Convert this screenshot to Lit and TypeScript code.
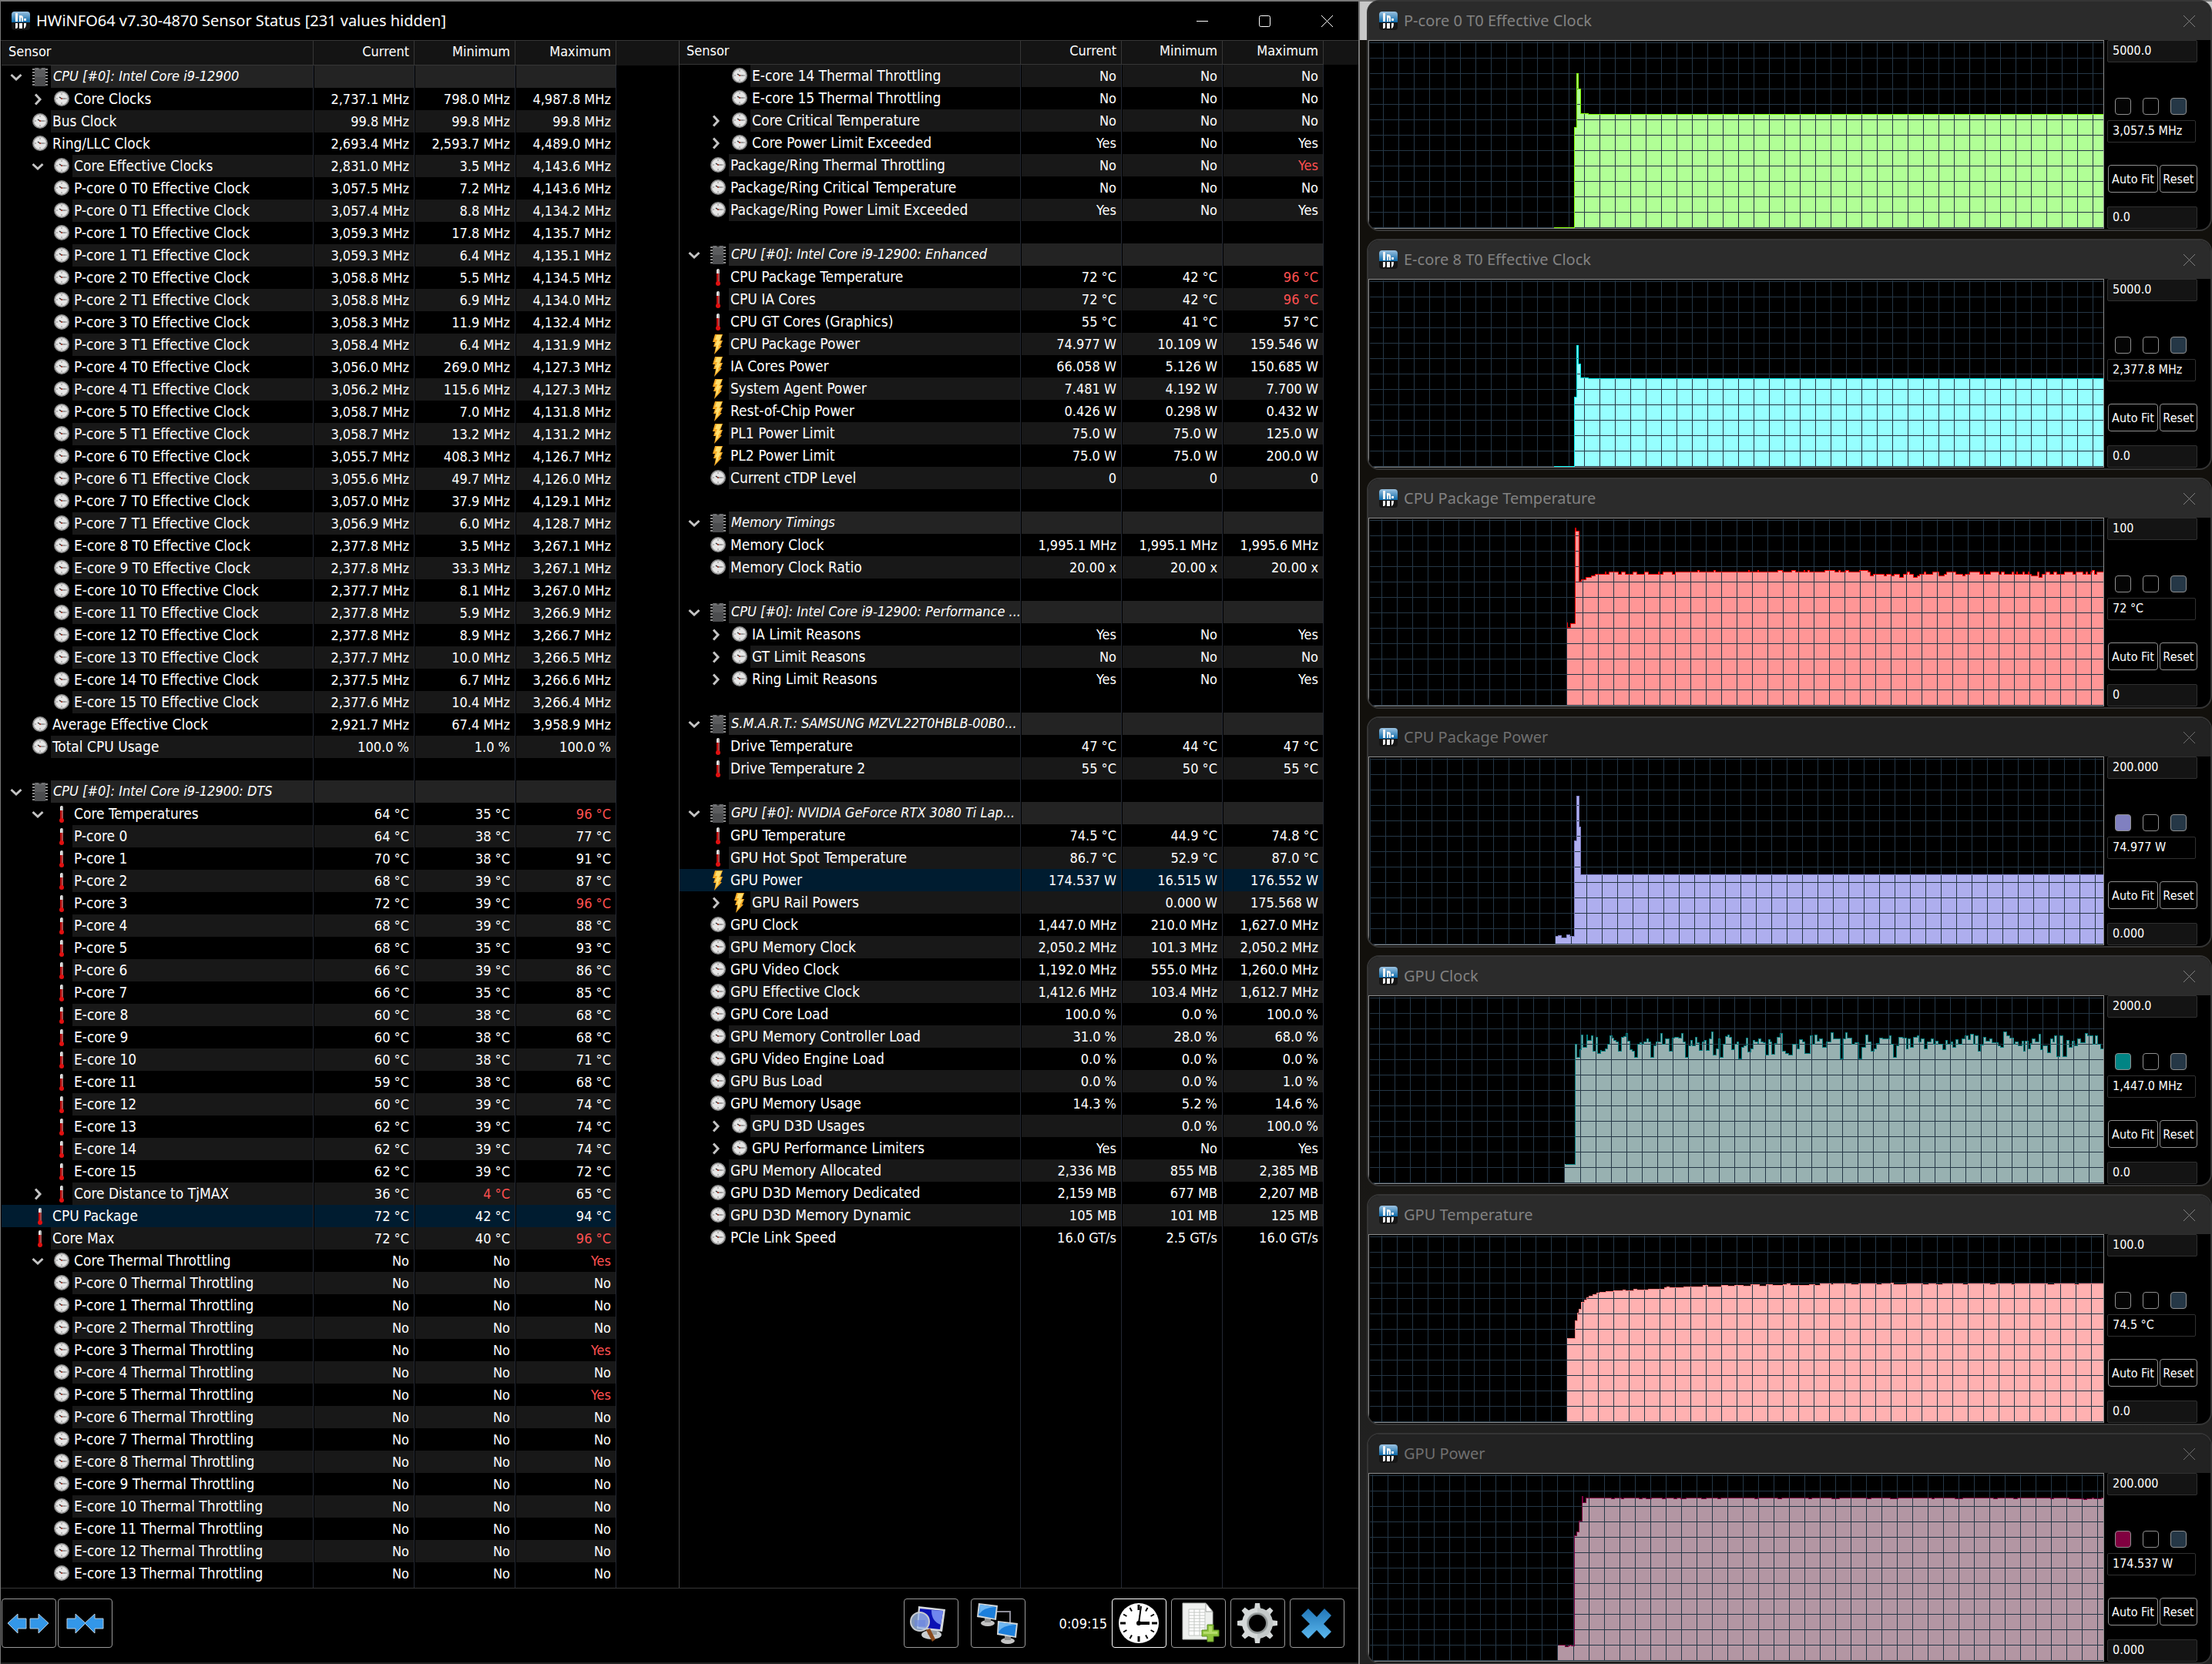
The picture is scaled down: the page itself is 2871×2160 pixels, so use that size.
import { LitElement, html, svg, css, nothing } from "lit";
import { customElement, property } from "lit/decorators.js";
import { classMap } from "lit/directives/class-map.js";

/* ---------- sensor data ----------
   Each line: level, chevron (v open, > closed, - none), icon, label | current | minimum | maximum.
   Icons: h chip, c clock, t thermometer, b bolt. "*" marks the selected row, "!" an alarm value.
   A blank line ends a group. */

const LEFT = `
0vh CPU [#0]: Intel Core i9-12900
1>c Core Clocks|2,737.1 MHz|798.0 MHz|4,987.8 MHz
0-c Bus Clock|99.8 MHz|99.8 MHz|99.8 MHz
0-c Ring/LLC Clock|2,693.4 MHz|2,593.7 MHz|4,489.0 MHz
1vc Core Effective Clocks|2,831.0 MHz|3.5 MHz|4,143.6 MHz
1-c P-core 0 T0 Effective Clock|3,057.5 MHz|7.2 MHz|4,143.6 MHz
1-c P-core 0 T1 Effective Clock|3,057.4 MHz|8.8 MHz|4,134.2 MHz
1-c P-core 1 T0 Effective Clock|3,059.3 MHz|17.8 MHz|4,135.7 MHz
1-c P-core 1 T1 Effective Clock|3,059.3 MHz|6.4 MHz|4,135.1 MHz
1-c P-core 2 T0 Effective Clock|3,058.8 MHz|5.5 MHz|4,134.5 MHz
1-c P-core 2 T1 Effective Clock|3,058.8 MHz|6.9 MHz|4,134.0 MHz
1-c P-core 3 T0 Effective Clock|3,058.3 MHz|11.9 MHz|4,132.4 MHz
1-c P-core 3 T1 Effective Clock|3,058.4 MHz|6.4 MHz|4,131.9 MHz
1-c P-core 4 T0 Effective Clock|3,056.0 MHz|269.0 MHz|4,127.3 MHz
1-c P-core 4 T1 Effective Clock|3,056.2 MHz|115.6 MHz|4,127.3 MHz
1-c P-core 5 T0 Effective Clock|3,058.7 MHz|7.0 MHz|4,131.8 MHz
1-c P-core 5 T1 Effective Clock|3,058.7 MHz|13.2 MHz|4,131.2 MHz
1-c P-core 6 T0 Effective Clock|3,055.7 MHz|408.3 MHz|4,126.7 MHz
1-c P-core 6 T1 Effective Clock|3,055.6 MHz|49.7 MHz|4,126.0 MHz
1-c P-core 7 T0 Effective Clock|3,057.0 MHz|37.9 MHz|4,129.1 MHz
1-c P-core 7 T1 Effective Clock|3,056.9 MHz|6.0 MHz|4,128.7 MHz
1-c E-core 8 T0 Effective Clock|2,377.8 MHz|3.5 MHz|3,267.1 MHz
1-c E-core 9 T0 Effective Clock|2,377.8 MHz|33.3 MHz|3,267.1 MHz
1-c E-core 10 T0 Effective Clock|2,377.7 MHz|8.1 MHz|3,267.0 MHz
1-c E-core 11 T0 Effective Clock|2,377.8 MHz|5.9 MHz|3,266.9 MHz
1-c E-core 12 T0 Effective Clock|2,377.8 MHz|8.9 MHz|3,266.7 MHz
1-c E-core 13 T0 Effective Clock|2,377.7 MHz|10.0 MHz|3,266.5 MHz
1-c E-core 14 T0 Effective Clock|2,377.5 MHz|6.7 MHz|3,266.6 MHz
1-c E-core 15 T0 Effective Clock|2,377.6 MHz|10.4 MHz|3,266.4 MHz
0-c Average Effective Clock|2,921.7 MHz|67.4 MHz|3,958.9 MHz
0-c Total CPU Usage|100.0 %|1.0 %|100.0 %

0vh CPU [#0]: Intel Core i9-12900: DTS
1vt Core Temperatures|64 °C|35 °C|!96 °C
1-t P-core 0|64 °C|38 °C|77 °C
1-t P-core 1|70 °C|38 °C|91 °C
1-t P-core 2|68 °C|39 °C|87 °C
1-t P-core 3|72 °C|39 °C|!96 °C
1-t P-core 4|68 °C|39 °C|88 °C
1-t P-core 5|68 °C|35 °C|93 °C
1-t P-core 6|66 °C|39 °C|86 °C
1-t P-core 7|66 °C|35 °C|85 °C
1-t E-core 8|60 °C|38 °C|68 °C
1-t E-core 9|60 °C|38 °C|68 °C
1-t E-core 10|60 °C|38 °C|71 °C
1-t E-core 11|59 °C|38 °C|68 °C
1-t E-core 12|60 °C|39 °C|74 °C
1-t E-core 13|62 °C|39 °C|74 °C
1-t E-core 14|62 °C|39 °C|74 °C
1-t E-core 15|62 °C|39 °C|72 °C
1>t Core Distance to TjMAX|36 °C|!4 °C|65 °C
*0-t CPU Package|72 °C|42 °C|94 °C
0-t Core Max|72 °C|40 °C|!96 °C
1vc Core Thermal Throttling|No|No|!Yes
1-c P-core 0 Thermal Throttling|No|No|No
1-c P-core 1 Thermal Throttling|No|No|No
1-c P-core 2 Thermal Throttling|No|No|No
1-c P-core 3 Thermal Throttling|No|No|!Yes
1-c P-core 4 Thermal Throttling|No|No|No
1-c P-core 5 Thermal Throttling|No|No|!Yes
1-c P-core 6 Thermal Throttling|No|No|No
1-c P-core 7 Thermal Throttling|No|No|No
1-c E-core 8 Thermal Throttling|No|No|No
1-c E-core 9 Thermal Throttling|No|No|No
1-c E-core 10 Thermal Throttling|No|No|No
1-c E-core 11 Thermal Throttling|No|No|No
1-c E-core 12 Thermal Throttling|No|No|No
1-c E-core 13 Thermal Throttling|No|No|No`;

const RIGHT = `
1-c E-core 14 Thermal Throttling|No|No|No
1-c E-core 15 Thermal Throttling|No|No|No
1>c Core Critical Temperature|No|No|No
1>c Core Power Limit Exceeded|Yes|No|Yes
0-c Package/Ring Thermal Throttling|No|No|!Yes
0-c Package/Ring Critical Temperature|No|No|No
0-c Package/Ring Power Limit Exceeded|Yes|No|Yes

0vh CPU [#0]: Intel Core i9-12900: Enhanced
0-t CPU Package Temperature|72 °C|42 °C|!96 °C
0-t CPU IA Cores|72 °C|42 °C|!96 °C
0-t CPU GT Cores (Graphics)|55 °C|41 °C|57 °C
0-b CPU Package Power|74.977 W|10.109 W|159.546 W
0-b IA Cores Power|66.058 W|5.126 W|150.685 W
0-b System Agent Power|7.481 W|4.192 W|7.700 W
0-b Rest-of-Chip Power|0.426 W|0.298 W|0.432 W
0-b PL1 Power Limit|75.0 W|75.0 W|125.0 W
0-b PL2 Power Limit|75.0 W|75.0 W|200.0 W
0-c Current cTDP Level|0|0|0

0vh Memory Timings
0-c Memory Clock|1,995.1 MHz|1,995.1 MHz|1,995.6 MHz
0-c Memory Clock Ratio|20.00 x|20.00 x|20.00 x

0vh CPU [#0]: Intel Core i9-12900: Performance ...
1>c IA Limit Reasons|Yes|No|Yes
1>c GT Limit Reasons|No|No|No
1>c Ring Limit Reasons|Yes|No|Yes

0vh S.M.A.R.T.: SAMSUNG MZVL22T0HBLB-00B0...
0-t Drive Temperature|47 °C|44 °C|47 °C
0-t Drive Temperature 2|55 °C|50 °C|55 °C

0vh GPU [#0]: NVIDIA GeForce RTX 3080 Ti Lap...
0-t GPU Temperature|74.5 °C|44.9 °C|74.8 °C
0-t GPU Hot Spot Temperature|86.7 °C|52.9 °C|87.0 °C
*0-b GPU Power|174.537 W|16.515 W|176.552 W
1>b GPU Rail Powers||0.000 W|175.568 W
0-c GPU Clock|1,447.0 MHz|210.0 MHz|1,627.0 MHz
0-c GPU Memory Clock|2,050.2 MHz|101.3 MHz|2,050.2 MHz
0-c GPU Video Clock|1,192.0 MHz|555.0 MHz|1,260.0 MHz
0-c GPU Effective Clock|1,412.6 MHz|103.4 MHz|1,612.7 MHz
0-c GPU Core Load|100.0 %|0.0 %|100.0 %
0-c GPU Memory Controller Load|31.0 %|28.0 %|68.0 %
0-c GPU Video Engine Load|0.0 %|0.0 %|0.0 %
0-c GPU Bus Load|0.0 %|0.0 %|1.0 %
0-c GPU Memory Usage|14.3 %|5.2 %|14.6 %
1>c GPU D3D Usages||0.0 %|100.0 %
1>c GPU Performance Limiters|Yes|No|Yes
0-c GPU Memory Allocated|2,336 MB|855 MB|2,385 MB
0-c GPU D3D Memory Dedicated|2,159 MB|677 MB|2,207 MB
0-c GPU D3D Memory Dynamic|105 MB|101 MB|125 MB
0-c PCIe Link Speed|16.0 GT/s|2.5 GT/s|16.0 GT/s`;

interface Row {
  level: number;
  chevron: string;
  icon: string;
  label: string;
  values: string[];
  selected: boolean;
}

const parse = (text: string): Row[][] =>
  text.trim().split("\n\n").map((group) =>
    group.split("\n").map((line) => {
      const selected = line.startsWith("*");
      const body = selected ? line.slice(1) : line;
      const [label, ...values] = body.slice(4).split("|");
      return {
        level: Number(body[0]),
        chevron: body[1],
        icon: body[2],
        label,
        values: values.length ? values : ["", "", ""],
        selected,
      };
    }),
  );

/* ---------- chart data ----------
   A segment is a list of steps "x:y" mapped into the plot by x0 + kx*x and y0 + ky*y. */

interface Segment {
  x0: number;
  kx: number;
  y0: number;
  ky: number;
  steps: string;
}

interface Chart {
  title: string;
  max: string;
  min: string;
  value: string;
  fill: string;
  line: string;
  swatch: string;
  gridStart: number;
  dim?: boolean;
  segments: Segment[];
}

const PLOT_W = 953;
const PLOT_H = 243;

const CHARTS: Chart[] = [
  {
    title: "P-core 0 T0 Effective Clock", max: "5000.0", min: "0.0", value: "3,057.5 MHz",
    fill: "#b1ff96", line: "#80ff00", swatch: "#050505", gridStart: 18,
    segments: [{ x0: -1777, kx: 1, y0: -53, ky: 1, steps: "2016:295 2043:165 2046:95 2048:115 2051:147 2061:148" }],
  },
  {
    title: "E-core 8 T0 Effective Clock", max: "5000.0", min: "0.0", value: "2,377.8 MHz",
    fill: "#96ffff", line: "#00f0f0", swatch: "#050505", gridStart: 18,
    segments: [{ x0: -1777, kx: 1, y0: -53, ky: 1, steps: "2016:295 2043:205 2046:138 2048:162 2051:180 2061:181" }],
  },
  {
    title: "CPU Package Temperature", max: "100", min: "0", value: "72 °C",
    fill: "#ff9696", line: "#ff0000", swatch: "#050505", gridStart: 16,
    segments: [{
      x0: 183, kx: 0.581, y0: 242, ky: -2.4,
      steps: "127:45 128:42 134:44 144:96 147:94 153:67 159:68 169:69 181:70 190:71 211:72 214:71 221:72 241:71 247:72 256:71 273:72 282:71 299:72 308:71 331:72 333:71 341:72 361:71 368:72 418:73 421:72 454:73 457:72 531:73 534:72 552:73 555:72 598:73 607:72 628:73 637:72 655:73 658:72 665:73 668:72 702:73 725:72 733:73 736:72 748:73 756:72 779:73 798:72 803:70 810:71 834:70 840:71 851:70 857:71 869:69 877:71 886:72 892:71 900:69 908:70 914:71 924:72 927:71 943:72 957:70 969:71 975:72 994:71 1010:70 1015:71 1026:72 1049:71 1058:72 1061:71 1073:72 1092:71 1097:72 1104:71 1121:72 1124:71 1130:72 1133:71 1145:72 1148:71 1156:72 1159:71 1164:70 1177:72 1180:69 1188:71 1196:72 1204:71 1213:72 1221:71 1238:72 1256:71 1264:72 1279:71 1285:72 1289:71 1296:72 1299:73 1304:71 1310:72",
    }],
  },
  {
    title: "CPU Package Power", max: "200.000", min: "0.000", value: "74.977 W",
    fill: "#aeaeee", line: "#8080c8", swatch: "#8080c0", gridStart: 1, dim: true,
    segments: [{ x0: -1777, kx: 1, y0: 242, ky: -1.2, steps: "2018:8 2022:9 2026:7 2033:10 2037:8 2043:112 2046:160 2049:127 2051:75" }],
  },
  {
    title: "GPU Clock", max: "2000.0", min: "0.0", value: "1,447.0 MHz",
    fill: "#98b1b1", line: "#008080", swatch: "#008484", gridStart: 13,
    segments: [
      {
        x0: -17, kx: 0.3333, y0: -73, ky: 0.3333,
        steps: "813:874 851:406 857:457 869:427 877:370 883:418 896:370 901:391 914:373 920:433 932:379 938:442 950:430 953:433 968:424 977:406 986:373 995:382 1001:391 1010:397 1019:433 1031:379 1040:376 1049:364 1055:394 1064:427 1073:433 1082:457 1094:406 1103:400 1109:406 1120:397 1130:385 1136:397 1145:457 1157:412 1166:397 1184:364 1190:406 1202:385 1217:433 1229:382 1238:379 1253:382 1265:364 1271:397 1280:457 1292:412 1301:391 1307:412 1319:379 1325:400 1334:430 1346:397 1355:391 1361:430 1373:385 1382:358 1388:448 1400:424 1409:385 1415:457 1427:406 1436:376 1445:370 1451:379 1460:427 1472:406 1481:397 1487:463 1499:418 1508:412 1517:382 1523:436 1535:424 1544:391 1550:397",
      },
      {
        x0: 183, kx: 0.581, y0: -53, ky: 0.3954,
        steps: "552:289 555:274 560:284 565:287 570:325 576:276 580:284 584:323 590:289 596:268 602:256 607:313 614:320 622:327 630:292 640:305 645:276 652:283 657:322 670:264 674:290 680:261 685:280 690:274 697:300 705:282 716:254 722:273 730:272 736:338 743:272 748:254 752:270 762:292 770:285 778:338 785:302 793:260 798:284 806:313 812:305 818:289 824:270 832:272 846:264 850:292 855:334 862:297 868:268 876:270 884:305 888:272 893:302 900:268 908:264 913:284 918:272 925:305 932:284 940:274 945:290 950:280 955:292 966:308 972:277 976:292 985:282 988:302 995:275 1000:290 1008:272 1016:264 1022:275 1028:259 1034:292 1038:262 1045:313 1050:293 1056:267 1062:280 1070:273 1076:285 1090:297 1095:302 1102:251 1108:262 1116:270 1124:292 1128:282 1135:296 1142:280 1146:313 1150:280 1156:306 1162:289 1165:274 1172:284 1180:259 1184:308 1190:297 1200:318 1207:272 1212:282 1216:264 1221:332 1228:264 1234:332 1242:277 1248:300 1254:280 1260:297 1267:272 1273:287 1284:256 1290:264 1298:262 1302:292 1306:262 1312:292 1318:307",
      },
    ],
  },
  {
    title: "GPU Temperature", max: "100.0", min: "0.0", value: "74.5 °C",
    fill: "#ffb1b1", line: "#ff8080", swatch: "#050505", gridStart: 16,
    segments: [{
      x0: 183, kx: 0.581, y0: -363, ky: 0.3954,
      steps: "127:1257 145:1199 149:1174 154:1160 159:1138 165:1130 170:1122 176:1117 185:1112 192:1107 200:1104 213:1102 230:1099 252:1097 256:1099 275:1094 282:1097 308:1094 345:1091 350:1088 355:1091 380:1089 388:1087 431:1083 440:1087 471:1083 485:1086 500:1082 520:1085 537:1081 556:1084 572:1081 585:1083 610:1081 618:1078 625:1082 667:1080 680:1083 692:1078 716:1081 722:1078 760:1081 778:1078 818:1081 830:1078 850:1076 855:1079 875:1081 886:1077 920:1080 935:1078 950:1081 965:1078 1010:1080 1022:1077 1070:1080 1085:1078 1118:1081 1127:1077 1200:1080 1215:1077 1260:1079 1270:1077",
    }],
  },
  {
    title: "GPU Power", max: "200.000", min: "0.000", value: "174.537 W",
    fill: "#b396a3", line: "#800040", swatch: "#800040", gridStart: 4, dim: true,
    segments: [{
      x0: -17, kx: 0.3333, y0: -73, ky: 0.3333,
      steps: "785:886 812:892 824:888 832:886 838:889 850:460 859:445 868:401 878:307 883:331 895:313 992:316 1004:313 1031:316 1040:313 1100:316 1112:313 1127:316 1148:313 1190:316 1202:313 1235:316 1247:313 1262:316 1283:313 1343:316 1363:313 1406:316 1418:313 1550:316 1562:313 1640:316 1655:313 1760:316 1772:313 1850:316 1880:313 1990:316 2005:313 2080:316 2110:313 2240:316 2250:313 2330:316 2360:313 2480:316 2495:313 2560:316 2575:313 2702:316 2714:313 2774:316 2832:319 2845:316 2866:313 2872:316 2902:313",
    }],
  },
];

const points = (segments: Segment[]) =>
  segments.flatMap((s) =>
    s.steps.split(" ").map((step) => {
      const [x, y] = step.split(":").map(Number);
      return [Math.round(s.x0 + s.kx * x), Math.round(s.y0 + s.ky * y)];
    }),
  );

/* ---------- icons ---------- */

const logo = html`<svg class="logo" viewBox="0 0 24 24" aria-hidden="true">
  <defs>
    <linearGradient id="lg" x1="0" y1="0" x2="0" y2="1">
      <stop offset="0" stop-color="#9cc3e2" /><stop offset="1" stop-color="#0b68a8" />
    </linearGradient>
  </defs>
  <rect width="24" height="24" rx="4" fill="#161616" />
  <path d="M0 14V4a4 4 0 0 1 4-4h16a4 4 0 0 1 4 4v10z" fill="url(#lg)" />
  <path d="M5 2h3v11H5zM10 5h2q3 0 3 3v5h-2V9q0-1-1-1v5h-2zM16 9h3v3h-3zM5 15h3v5q0 2-3 2zM10 15h4v7h-4zM16 15h3q0 6-3 7z" fill="#f4f4f4" />
</svg>`;

const chevrons: Record<string, unknown> = {
  v: svg`<path d="M1.500 5L8 11L14.500 5" />`,
  ">": svg`<path d="M5 1.500L11 8L5 14.500" />`,
};

const sensorIcons: Record<string, unknown> = {
  h: html`<svg class="sensor" viewBox="0 0 28 28" aria-hidden="true">
    <path d="M4 5h20M4 9h20M4 13h20M4 17h20M4 21h20M4 25h20" stroke="#8c8c8c" stroke-width="2" transform="translate(0 -1)" />
    <rect x="7" y="2" width="14" height="24" fill="#5a5b5d" />
    <path d="M8 2h12v3H8z" fill="#6f7072" /><path d="M12 2a2 2 0 0 0 4 0z" fill="#2b2b2b" />
    <path d="M7 14h14v12H7z" fill="#4c4d4f" />
  </svg>`,
  c: html`<svg class="sensor" viewBox="0 0 28 28" aria-hidden="true">
    <circle cx="14" cy="13" r="10" fill="#8d8d8d" />
    <circle cx="14" cy="13" r="8" fill="#e6e6e6" stroke="#c9c9c9" />
    <path d="M14 6v2M14 18v2M7 13h2M19 13h2" stroke="#888" />
    <path d="M14 13h5" stroke="#555" stroke-width="1" /><path d="M11 11l3 2" stroke="#333" stroke-width="1.500" />
    <circle cx="14" cy="13" r="1" fill="#b03a2a" />
  </svg>`,
  t: html`<svg class="sensor" viewBox="0 0 28 28" aria-hidden="true">
    <rect x="12" y="3" width="4" height="18" rx="2" fill="#e9e9e9" />
    <path d="M12 9h4v12h-4z" fill="#c40d0d" /><path d="M15 4v16" stroke="#8a8a8a" />
    <circle cx="14" cy="22" r="3" fill="#e01010" />
  </svg>`,
  b: html`<svg class="sensor" viewBox="0 0 28 28" aria-hidden="true">
    <path d="M10 1h10l-3 8h3l-3 7h2L9 27l2-10H8l2-6H7z" fill="#f6a823" />
    <path d="M12 2h7l-4 8h3l-4 7 1 1-4 5 1-8h-2l3-7h-3z" fill="#ffdf6e" />
  </svg>`,
};

const arrow = "M0 12L13 0V6H24V19H13V25Z";

const tools: Record<string, unknown> = {
  expand: svg`<g fill="#3397e8" stroke="#b9cbd9" stroke-width="1">
    <path d=${arrow} transform="translate(8 20)" /><path d=${arrow} transform="translate(61 20) scale(-1 1)" /></g>`,
  collapse: svg`<g fill="#3397e8" stroke="#b9cbd9" stroke-width="1">
    <path d=${arrow} transform="translate(36 20) scale(-1 1)" /><path d=${arrow} transform="translate(35 20)" /></g>`,
  inspect: svg`
    <ellipse cx="36" cy="47" rx="13" ry="6" fill="#c9cdd0" /><path d="M31 38l12 2v7H31z" fill="#9aa0a4" />
    <path d="M19 10l35 4-4 29-33-4z" fill="#d6dade" /><path d="M21 13l30 3-4 24-28-3z" fill="#0b12b4" />
    <path d="M36 15l15 1-3 18q-12-4-12-19z" fill="#6f86ee" />
    <path d="M29 41l5-2 7 14-4 3z" fill="#8a4a1c" /><circle cx="21" cy="30" r="12" fill="#9db9e6" fill-opacity="0.8" stroke="#c8ccd0" stroke-width="2" />
    <path d="M14 28h14v8H14z" fill="#6b86dd" fill-opacity="0.6" />`,
  remote: svg`
    <path d="M34 17h17v14" fill="none" stroke="#8d8d9a" stroke-width="2" />
    <g><ellipse cx="22" cy="32" rx="9" ry="4" fill="#c4c4c4" /><path d="M18 25h8v6h-8z" fill="#8f8f8f" />
      <path d="M10 6l25 3-2 19-25-4z" fill="#cfd6da" /><path d="M12 8l21 3-2 15-21-4z" fill="#1c7fdc" />
      <path d="M12 8l19 3q-15 1-20 9z" fill="#6fb7f2" /></g>
    <g transform="translate(25 23)"><ellipse cx="23" cy="32" rx="9" ry="4" fill="#c4c4c4" /><path d="M19 25h8v6h-8z" fill="#8f8f8f" />
      <path d="M10 6l26 3-2 19-25-4z" fill="#cfd6da" /><path d="M12 8l22 3-2 15-21-4z" fill="#1c7fdc" />
      <path d="M12 8l20 3q-16 1-21 9z" fill="#6fb7f2" /></g>`,
  clock: svg`<circle cx="35" cy="32" r="26" fill="#fff" />
    ${Array.from({ length: 12 }, (_, i) => svg`<path d=${i % 3 ? "M35 9v5" : "M35 8v7"} stroke="#000" stroke-width=${i % 3 ? 2 : 3} transform="rotate(${i * 30} 35 32)" />`)}
    <path d="M35 32l3-22" stroke="#000" stroke-width="2" /><path d="M35 32h14" stroke="#000" stroke-width="4" /><circle cx="35" cy="32" r="3" />`,
  log: svg`<path d="M15 6h30l9 11v36H15z" fill="#eef0ee" stroke="#b9bcb9" /><path d="M45 6v11h9z" fill="#fff" stroke="#9c9f9c" />
    <path d="M23 14h21v34H23z" fill="#fff" stroke="#c3c7c3" />
    <path d="M23 18h21M23 22h21M23 26h21M23 30h21M23 34h21M23 38h21M23 42h21M30 14v34M37 14v34" stroke="#c3c7c3" />
    <path d="M47 34h8v7h7v8h-7v7h-8v-7h-7v-8h7z" fill="#8fc43e" stroke="#5d8f22" /><path d="M49 36h4v7h7v3H42v-3h7z" fill="#b5dd6c" />`,
  settings: svg`<g fill="#d4d8d8">
      ${Array.from({ length: 8 }, (_, i) => svg`<path d="M31 14l1-8h6l1 8z" transform="rotate(${i * 45} 35 32)" />`)}
      <circle cx="35" cy="32" r="20" /></g>
    <path d="M35 12a20 20 0 0 1 20 20a20 20 0 0 1-20 20z" fill="#b3b9b9" fill-opacity="0.5" />
    <circle cx="35" cy="32" r="14" fill="#a9afaf" /><circle cx="35" cy="32" r="13" fill="#8b9090" /><circle cx="35" cy="32" r="11" fill="#000" />`,
  close: svg`<defs><linearGradient id="cx" x1="0" y1="0" x2="0" y2="1"><stop offset="0" stop-color="#2176b8" /><stop offset="1" stop-color="#5bb8ee" /></linearGradient></defs>
    <path d="M24 13l11 11 10-11 9 9-10 11 10 10-9 9-10-11-11 11-9-9 11-10-11-11z" fill="url(#cx)" />`,
};

const cross = html`<svg class="glyph" viewBox="0 0 15 15" aria-hidden="true"><path d="M0 0L15 15M15 0L0 15" /></svg>`;

const base = css`
  * { box-sizing: border-box; }
  button { margin: 0; padding: 0; border: 0; background: none; color: inherit; font: inherit; }
  .logo { display: block; width: 24px; height: 24px; flex: none; }
  .glyph { display: block; width: 15px; height: 15px; fill: none; stroke: currentColor; stroke-width: 1; overflow: visible; }
`;

/* ---------- sensor table ---------- */

@customElement("sensor-table")
export class SensorTable extends LitElement {
  static styles = [base, css`
    :host { display: flex; flex-direction: column; min-width: 0; color: #fff; }
    table { width: 100%; table-layout: fixed; border-collapse: separate; border-spacing: 0; }
    .value { width: 131px; }
    .rest { width: var(--rest); }
    th { height: var(--head); padding: 0 6px 4px; background: #141414; border-right: 1px solid #363636; border-bottom: 1px solid #363636; font-weight: 400; line-height: 22px; text-align: right; }
    th:first-child { padding-left: 9px; text-align: left; }
    th:last-child { border-right: 0; border-bottom-color: #141414; }
    td { height: 29px; padding: 0 6px 0 0; border-left: 1px solid #000; border-right: 1px solid #232833; line-height: 28px; text-align: right; white-space: nowrap; }
    td:first-child { padding: 0; border-left: 0; }
    td:last-child { border-right: 0; }
    .name { display: flex; align-items: center; height: 29px; padding-left: 5px; }
    .level1 { padding-left: 33px; }
    .toggle { flex: none; width: 28px; height: 28px; margin-right: 3px; display: grid; place-items: center; }
    .toggle svg { width: 16px; height: 16px; fill: none; stroke: #c4c4c4; stroke-width: 3; }
    .sensor { flex: none; width: 28px; height: 28px; }
    .label { flex: 1; min-width: 0; height: 29px; padding-left: 2px; font-size: 19px; line-height: 28px; text-align: left; overflow: hidden; }
    .stripe .label, .stripe .num { background: #181818; }
    .head .label, .head .num { background: #232323; font-style: italic; }
    .head .label { padding-left: 3px; font-size: 18px; }
    .selected td:not(.end), .selected .label { background: #001c30; }
    .alarm { color: #ff5050; }
    .rules { flex: 1; display: grid; grid-template-columns: minmax(0, 1fr) 131px 131px 131px var(--rest); }
    .rule { border-right: 1px solid #232833; }
  `];

  @property({ attribute: false }) groups: Row[][] = [];

  private row(r: Row, i: number) {
    const head = r.icon === "h";
    return html`<tr class=${classMap({ stripe: i % 2 === 0, head, selected: r.selected })}>
      <td>
        <div class=${classMap({ name: true, level1: r.level === 1 })}>
          ${r.chevron === "-"
            ? html`<span class="toggle"></span>`
            : html`<button class="toggle" aria-label=${r.label} aria-expanded=${r.chevron === "v"}>
                <svg viewBox="0 0 16 16" aria-hidden="true">${chevrons[r.chevron]}</svg>
              </button>`}
          ${sensorIcons[r.icon]}
          <span class="label">${r.label}</span>
        </div>
      </td>
      ${r.values.map((v) => html`<td class=${classMap({ num: true, alarm: v.startsWith("!") })}>${v.replace("!", "")}</td>`)}
      <td class="end"></td>
    </tr>`;
  }

  render() {
    const last = this.groups.length - 1;
    const gap = html`<tr><td></td><td></td><td></td><td></td><td></td></tr>`;
    return html`<table>
      <colgroup><col /><col class="value" /><col class="value" /><col class="value" /><col class="rest" /></colgroup>
      <thead><tr><th>Sensor</th><th>Current</th><th>Minimum</th><th>Maximum</th><th></th></tr></thead>
      ${this.groups.map((g, n) => html`<tbody>${g.map((r, i) => this.row(r, i))}${n < last ? gap : nothing}</tbody>`)}
    </table>
    <div class="rules"><div class="rule"></div><div class="rule"></div><div class="rule"></div><div class="rule"></div></div>`;
  }
}

/* ---------- graph window ---------- */

@customElement("graph-window")
export class GraphWindow extends LitElement {
  static styles = [base, css`
    :host { display: block; }
    .window { display: flex; flex-direction: column; border: 2px solid #353535; border-radius: 16px; overflow: hidden; background: #000; }
    .bar { display: flex; align-items: center; gap: 8px; height: 50px; padding: 0 20px 0 14px; background: #2b2b2b; color: #828282; }
    .dim .bar { background: #222; color: #707070; }
    .title { flex: 1; margin: 0; font: 400 var(--title) var(--ui); line-height: 28px; }
    .body { display: flex; height: 246px; }
    .plot { flex: 1; min-width: 0; height: 245px; border: 1px solid #8c8c8c; }
    .plot svg { display: block; width: 100%; height: 100%; shape-rendering: crispEdges; }
    .grid { fill: none; stroke: #253746; stroke-width: 1; }
    .line { fill: none; stroke-width: 1; }
    .side { flex: none; width: 138px; height: 245px; padding: 0 17px 0 4px; display: flex; flex-direction: column; color: #fff; font-size: 16px; }
    input { width: 117px; height: 29px; padding: 0 6px 3px; border: 1px solid #303030; border-radius: 2px; background: #141414; color: #fff; font: inherit; }
    .value { width: 115px; margin-top: 7px; background: #000; }
    .swatches { display: flex; gap: 15px; margin: 46px 0 0 10px; }
    .swatch { width: 21px; height: 22px; border: 1px solid #8f8f8f; border-radius: 4px; background: #000; }
    .gridcolor { background: #253746; }
    .actions { display: flex; gap: 2px; margin: 29px 0 0 1px; }
    .actions button { height: 36px; border: 1px solid #8f8f8f; border-radius: 4px; white-space: nowrap; }
    .fit { width: 66px; }
    .reset { width: 50px; }
    .low { margin-top: auto; }
  `];

  @property({ attribute: false }) chart!: Chart;

  render() {
    const c = this.chart;
    const pts = points(c.segments);
    let outline = `M${pts[0][0]} ${pts[0][1]}`;
    for (let i = 1; i < pts.length; i++) outline += `H${pts[i][0]}V${pts[i][1]}`;
    outline += `H${PLOT_W}`;
    const area = `${outline}V${PLOT_H}H${pts[0][0]}Z`;
    let grid = "";
    for (let y = 2; y < PLOT_H; y += 20) grid += `M0 ${y}H${PLOT_W}`;
    for (let k = 0; k < 48; k++) {
      const x = c.gridStart + 20 * k;
      grid += `M${x > pts[0][0] + 2 ? x + 1 : x} 0V${PLOT_H}`;
    }
    return html`<section class=${classMap({ window: true, dim: !!c.dim })}>
      <header class="bar">
        ${logo}
        <h2 class="title">${c.title}</h2>
        <button aria-label="Close">${cross}</button>
      </header>
      <div class="body">
        <div class="plot">
          <svg viewBox="0 0 ${PLOT_W} ${PLOT_H}" preserveAspectRatio="none" role="img" aria-label=${c.title}>
            <path d=${area} fill=${c.fill} />
            <path class="grid" d=${grid} transform="translate(0.500 0.500)" />
            <path class="line" d=${outline} stroke=${c.line} transform="translate(0.500 0.500)" />
          </svg>
        </div>
        <div class="side">
          <input aria-label="Maximum" .value=${c.max} />
          <div class="swatches">
            <button class="swatch" aria-label="Line colour" style="background:${c.swatch}"></button>
            <button class="swatch" aria-label="Background colour"></button>
            <button class="swatch gridcolor" aria-label="Grid colour"></button>
          </div>
          <input class="value" aria-label="Value" readonly .value=${c.value} />
          <div class="actions"><button class="fit">Auto Fit</button><button class="reset">Reset</button></div>
          <input class="low" aria-label="Minimum" .value=${c.min} />
        </div>
      </div>
    </section>`;
  }
}

/* ---------- application ---------- */

@customElement("app-root")
export class AppRoot extends LitElement {
  static styles = [base, css`
    :host {
      --ui: "Noto Sans", "Open Sans", sans-serif;
      --title: 20px;
      display: grid;
      grid-template-columns: minmax(0, 1765fr) minmax(0, 1106fr);
      min-height: 100vh;
      background: #0f0c09;
      font: 18px "DejaVu Sans Condensed", "DejaVu Sans", sans-serif;
    }
    .main { display: flex; flex-direction: column; border: solid #777; border-width: 2px 2px 0 1px; background: #000; color: #fff; }
    .bar { display: flex; align-items: center; height: 50px; padding-left: 14px; gap: 8px; }
    .title { flex: 1; margin: 0; font: 400 var(--title) var(--ui); line-height: 28px; }
    .controls { display: flex; }
    .controls button { width: 81px; height: 50px; display: grid; place-items: center; }
    .tables { flex: 1; display: grid; grid-template-columns: minmax(0, 880fr) minmax(0, 882fr); border: solid #363636; border-width: 1px 0; }
    .first { --rest: 81px; --head: 32px; padding-left: 1px; }
    .second { --rest: 45px; --head: 31px; border-left: 1px solid #444; }
    .toolbar { display: flex; align-items: center; gap: 6px; height: 98px; padding: 0 18px 6px 1px; border-bottom: 2px solid #222; }
    .tool { width: 71px; height: 64px; border: 1px solid #999; border-radius: 4px; }
    .tool svg { display: block; width: 69px; height: 62px; }
    .pressed { border-color: #fff; }
    .fold { display: flex; gap: 2px; margin-right: auto; }
    .remote { display: flex; gap: 16px; }
    .time { margin-left: 38px; }
    .desktop { display: flex; flex-direction: column; gap: 10px; padding-left: 9px; background: linear-gradient(#777 2px, #c8c8c8 2px, #c8c8c8 52px, transparent 52px), linear-gradient(#12100c 60%, #232323 90%); }
  `];

  private left = parse(LEFT);
  private right = parse(RIGHT);

  private tool(name: string, label: string, pressed = false) {
    return html`<button class=${classMap({ tool: true, pressed })} aria-label=${label}>
      <svg viewBox="1 1 69 62" aria-hidden="true">${tools[name]}</svg>
    </button>`;
  }

  render() {
    return html`
      <main class="main">
        <header class="bar">
          ${logo}
          <h1 class="title">HWiNFO64 v7.30-4870 Sensor Status [231 values hidden]</h1>
          <div class="controls">
            <button aria-label="Minimize"><svg class="glyph" viewBox="0 0 15 15"><path d="M0 7.500H15" /></svg></button>
            <button aria-label="Maximize"><svg class="glyph" viewBox="0 0 15 15"><rect x="0.500" y="0.500" width="14" height="14" rx="2" /></svg></button>
            <button aria-label="Close">${cross}</button>
          </div>
        </header>
        <div class="tables">
          <sensor-table class="first" .groups=${this.left}></sensor-table>
          <sensor-table class="second" .groups=${this.right}></sensor-table>
        </div>
        <footer class="toolbar">
          <div class="fold">${this.tool("expand", "Expand columns")}${this.tool("collapse", "Shrink columns")}</div>
          <div class="remote">${this.tool("inspect", "Summary")}${this.tool("remote", "Remote monitoring")}</div>
          <time class="time">0:09:15</time>
          ${this.tool("clock", "Reset clock", true)}${this.tool("log", "Start logging")}${this.tool("settings", "Settings")}${this.tool("close", "Close")}
        </footer>
      </main>
      <aside class="desktop">
        ${CHARTS.map((c) => html`<graph-window .chart=${c}></graph-window>`)}
      </aside>`;
  }
}
